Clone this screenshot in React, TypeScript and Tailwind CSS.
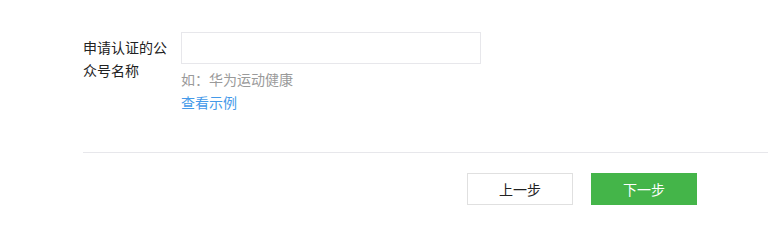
export default function App() {
  return (
    <div
      className="h-[226px] w-[768px] bg-white pl-[83px] pt-[32px] text-[14px] text-[#222]"
      style={{ fontFamily: '"Microsoft YaHei", "Noto Sans CJK SC", sans-serif' }}
    >
      <div className="flex">
        <label className="w-[98px] shrink-0 pt-[4px] pr-[12px] leading-[23px] break-all">
          申请认证的公众号名称
        </label>
        <div className="flex flex-col">
          <input
            type="text"
            className="h-[32px] w-[300px] border border-[#e7e7eb] px-[10px] outline-none"
          />
          <p className="mt-[4px] leading-[23px] text-[#9a9a9a]">如：华为运动健康</p>
          <a href="#" className="leading-[23px] text-[#459ae9]">
            查看示例
          </a>
        </div>
      </div>
      <div className="mt-[38px] border-t border-[#e7e7eb]" />
      <div className="mt-[20px] flex gap-[18px] pl-[384px]">
        <button className="h-[32px] w-[106px] border border-[#e0e0e0] bg-white text-[#222]">
          上一步
        </button>
        <button className="h-[32px] w-[106px] bg-[#44b549] text-white">下一步</button>
      </div>
    </div>
  );
}
